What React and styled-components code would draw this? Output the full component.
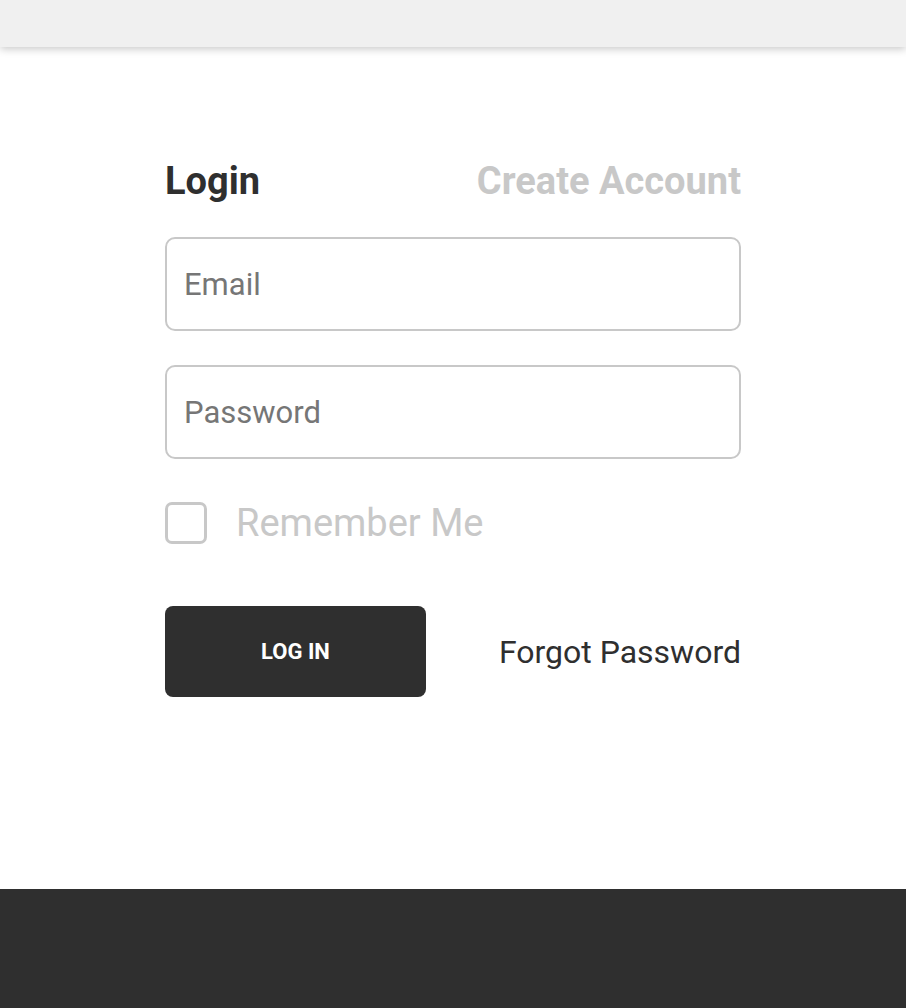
import React from 'react'
import styled, { createGlobalStyle } from 'styled-components'

const GlobalStyle = createGlobalStyle`
  body {
    margin: 0;
    font-family: Roboto, "Liberation Sans", sans-serif;
    background: #ffffff;
  }
`

const Header = styled.header`
  height: 47px;
  background-color: #f0f0f0;
  box-shadow: 0 2px 8px rgba(0, 0, 0, 0.22);
  position: relative;
  z-index: 1;
`

const Main = styled.main`
  display: flex;
  justify-content: center;
  padding: 115px 0 192px;
`

const Form = styled.form`
  width: 576px;
  display: flex;
  flex-direction: column;
`

const Tabs = styled.div`
  display: flex;
  justify-content: space-between;
  align-items: center;
  margin-bottom: 37px;
`

const Tab = styled.span`
  font-size: 38px;
  line-height: 38px;
  font-weight: 700;
  color: ${({ active }) => (active ? '#2f2f2f' : '#c8c8c8')};
  cursor: pointer;
`

const Input = styled.input`
  box-sizing: border-box;
  height: 94px;
  width: 100%;
  border: 2px solid #c8c8c8;
  border-radius: 10px;
  padding: 0 17px;
  font-family: Roboto, "Liberation Sans", sans-serif;
  font-size: 31px;
  color: #2f2f2f;
  margin-bottom: ${({ gap }) => gap}px;
  outline: none;

  &::placeholder {
    color: #767676;
  }
`

const CheckRow = styled.label`
  display: flex;
  align-items: center;
  gap: 29px;
  margin-bottom: 61px;
  cursor: pointer;
`

const Box = styled.span`
  box-sizing: border-box;
  width: 42px;
  height: 42px;
  border: 3px solid #c8c8c8;
  border-radius: 7px;
  flex-shrink: 0;
`

const CheckText = styled.span`
  font-size: 38px;
  color: #c8c8c8;
`

const Actions = styled.div`
  display: flex;
  justify-content: space-between;
  align-items: center;
`

const Button = styled.button`
  width: 261px;
  height: 91px;
  border: none;
  border-radius: 8px;
  background-color: #2f2f2f;
  color: #ffffff;
  font-family: Roboto, "Liberation Sans", sans-serif;
  font-size: 22px;
  font-weight: 700;
  cursor: pointer;
`

const Link = styled.a`
  font-size: 32px;
  color: #2f2f2f;
  text-decoration: none;
  cursor: pointer;
`

const Footer = styled.footer`
  height: 119px;
  background-color: #2f2f2f;
`

const App = () => (
  <>
    <GlobalStyle />
    <Header />
    <Main>
      <Form onSubmit={(e) => e.preventDefault()}>
        <Tabs>
          <Tab active>Login</Tab>
          <Tab>Create Account</Tab>
        </Tabs>
        <Input type="email" placeholder="Email" gap={34} />
        <Input type="password" placeholder="Password" gap={42} />
        <CheckRow>
          <Box />
          <CheckText>Remember Me</CheckText>
        </CheckRow>
        <Actions>
          <Button type="submit">LOG IN</Button>
          <Link>Forgot Password</Link>
        </Actions>
      </Form>
    </Main>
    <Footer />
  </>
)

export default App
